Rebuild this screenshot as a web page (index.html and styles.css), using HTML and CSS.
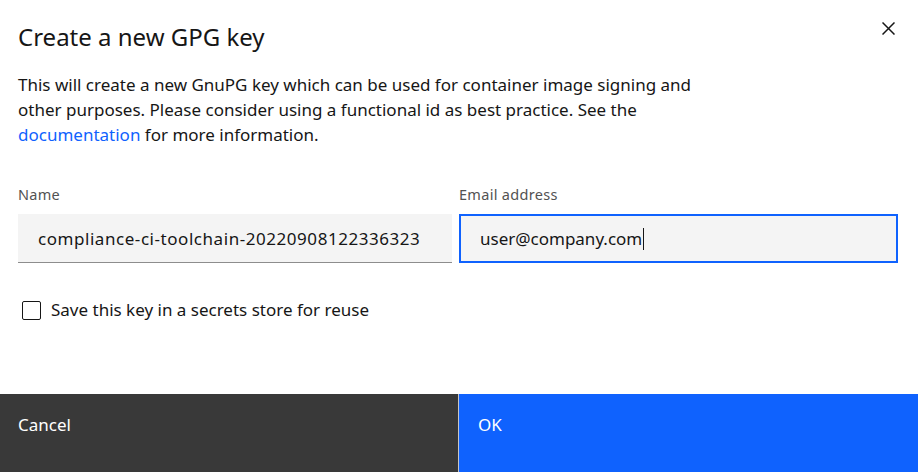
FILE: index.html
```html
<!DOCTYPE html>
<html>
<head>
<meta charset="utf-8">
<link rel="stylesheet" href="styles.css">
</head>
<body>
<div class="modal">
  <div class="header">
    <h2 class="title">Create a new GPG key</h2>
    <button class="close" aria-label="Close">
      <svg width="13" height="13" viewBox="0 0 13 13"><path d="M0.5 0.5 L12.5 12.5 M12.5 0.5 L0.5 12.5" stroke="#161616" stroke-width="1.5" fill="none"/></svg>
    </button>
  </div>
  <p class="desc">This will create a new GnuPG key which can be used for container image signing and other purposes. Please consider using a functional id as best practice. See the <a href="#" class="link">documentation</a> for more information.</p>
  <div class="fields">
    <div class="field">
      <label class="label">Name</label>
      <div class="input name-input">compliance-ci-toolchain-20220908122336323</div>
    </div>
    <div class="field">
      <label class="label">Email address</label>
      <div class="input focused">user@company.com<span class="caret"></span></div>
    </div>
  </div>
  <div class="check">
    <span class="box"></span>
    <span class="check-label">Save this key in a secrets store for reuse</span>
  </div>
  <div class="footer">
    <div class="btn secondary">Cancel</div>
    <div class="btn primary">OK</div>
  </div>
</div>
</body>
</html>
```
FILE: styles.css
```css
* { box-sizing: border-box; }
html, body { margin: 0; padding: 0; background: #fff; }
body { font-family: "Noto Sans", "Liberation Sans", sans-serif; color: #161616; }
.modal { width: 918px; height: 472px; display: flex; flex-direction: column; background: #fff; }
.header { display: flex; justify-content: space-between; align-items: flex-start; padding: 23px 23px 0 18px; }
.title { margin: 0; font-size: 24px; font-weight: 400; line-height: 28px; color: #161616; }
.close { border: 0; background: none; padding: 0; margin-top: -1px; width: 13px; height: 13px; display: flex; }
.desc { margin: 21px 0 0 18px; width: 700px; font-size: 17px; line-height: 25px; }
.link { color: #0f62fe; text-decoration: none; }
.fields { display: grid; grid-template-columns: 434px 439px; gap: 7px; padding: 0 0 0 18px; margin-top: 39px; }
.field { display: flex; flex-direction: column; }
.label { font-size: 14.5px; line-height: 16px; color: #525252; margin-bottom: 12px; letter-spacing: 0.3px; }
.input { height: 49px; background: #f4f4f4; border-bottom: 1px solid #8d8d8d; padding: 0 20px; display: flex; align-items: center; font-size: 17px; color: #161616; }
.name-input { letter-spacing: 0.55px; }
.input.focused { border: 2px solid #0f62fe; padding-left: 19px; }
.caret { display: inline-block; width: 1px; height: 22px; background: #161616; margin-left: 1px; }
.check { display: flex; align-items: center; gap: 10px; margin: 37px 0 0 22px; }
.box { width: 19px; height: 19px; border: 1px solid #161616; border-radius: 2px; }
.check-label { font-size: 17px; line-height: 20px; }
.footer { margin-top: auto; display: flex; height: 78px; }
.btn { flex: 1; color: #fff; font-size: 17px; padding: 20px 18px; line-height: 22px; }
.secondary { background: #393939; border-right: 1px solid #c6c6c6; }
.primary { background: #0f62fe; padding-left: 19px; }
```
